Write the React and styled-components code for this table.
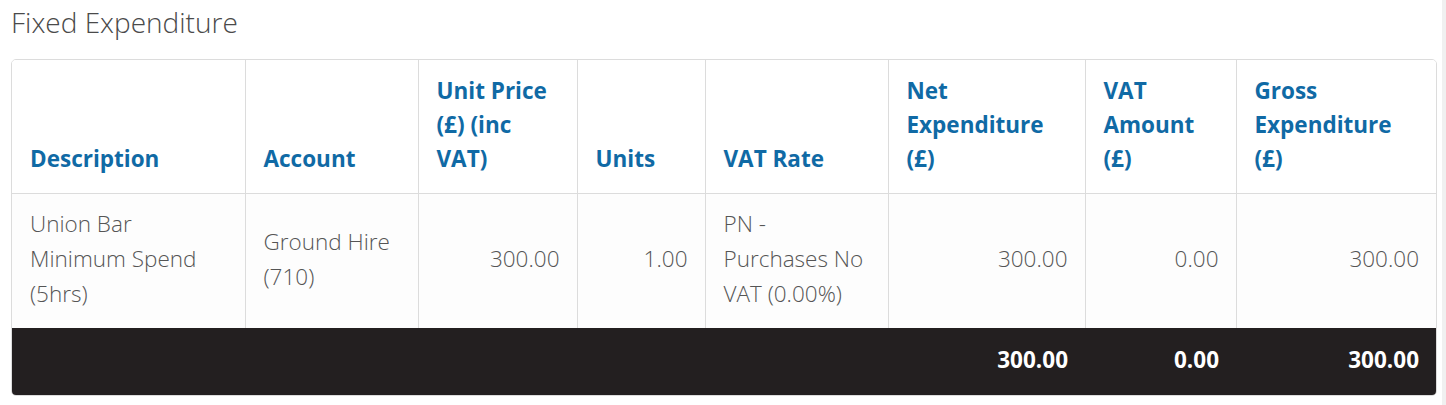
import React from 'react';
import styled, { createGlobalStyle } from 'styled-components';

const GlobalStyle = createGlobalStyle`
  body {
    margin: 0;
    background: #ffffff;
    font-family: "Open Sans", "Liberation Sans", sans-serif;
  }
`;

const Page = styled.div`
  display: flex;
  min-height: 405px;
`;

const Main = styled.div`
  flex: 1;
  padding: 0 5px 0 11px;
`;

const EdgeStrip = styled.div`
  width: 4px;
  background: #f0f0f0;
`;

const Title = styled.h2`
  margin: 0;
  padding: 4px 0 0 0;
  height: 59px;
  box-sizing: border-box;
  font-size: 28px;
  line-height: 36px;
  font-weight: 300;
  color: #4a4a4a;
`;

const TableFrame = styled.div`
  border: 1px solid #dcdcdc;
  border-radius: 5px;
  overflow: hidden;
`;

const Table = styled.table`
  width: 100%;
  border-collapse: collapse;
  table-layout: fixed;
`;

const HeadCell = styled.th`
  padding: 14px 18px 17px 18px;
  text-align: left;
  vertical-align: bottom;
  font-size: 22.5px;
  line-height: 34px;
  font-weight: 700;
  color: #106aa5;
  background: #ffffff;
  border-left: 1px solid #dcdcdc;
  border-bottom: 1px solid #dcdcdc;
  &:first-child {
    border-left: none;
  }
`;

const BodyCell = styled.td`
  padding: 12px 17px 17px 18px;
  text-align: ${(p) => (p.$num ? 'right' : 'left')};
  vertical-align: middle;
  font-size: 22.5px;
  line-height: 35px;
  font-weight: 300;
  color: #555555;
  background: #fdfdfd;
  border-left: 1px solid #dcdcdc;
  &:first-child {
    border-left: none;
  }
`;

const FootCell = styled.td`
  height: 67px;
  padding: 0 17px 4px 18px;
  box-sizing: border-box;
  text-align: right;
  vertical-align: middle;
  font-size: 22.5px;
  font-weight: 700;
  color: #ffffff;
  background: #231f20;
`;

const columns = [
  { label: 'Description', width: 233 },
  { label: 'Account', width: 173 },
  { label: 'Unit Price (£) (inc VAT)', width: 159 },
  { label: 'Units', width: 128 },
  { label: 'VAT Rate', width: 183 },
  { label: 'Net Expenditure (£)', width: 197 },
  { label: 'VAT Amount (£)', width: 151 },
  { label: 'Gross Expenditure (£)' },
];

const row = [
  { value: 'Union Bar Minimum Spend (5hrs)' },
  { value: 'Ground Hire (710)' },
  { value: '300.00', num: true },
  { value: '1.00', num: true },
  { value: 'PN - Purchases No VAT (0.00%)' },
  { value: '300.00', num: true },
  { value: '0.00', num: true },
  { value: '300.00', num: true },
];

const totals = ['300.00', '0.00', '300.00'];

export default function App() {
  return (
    <Page>
      <GlobalStyle />
      <Main>
        <Title>Fixed Expenditure</Title>
        <TableFrame>
          <Table>
            <colgroup>
              {columns.map((c) => (
                <col key={c.label} style={c.width ? { width: c.width } : undefined} />
              ))}
            </colgroup>
            <thead>
              <tr>
                {columns.map((c) => (
                  <HeadCell key={c.label}>{c.label}</HeadCell>
                ))}
              </tr>
            </thead>
            <tbody>
              <tr>
                {row.map((cell, i) => (
                  <BodyCell key={i} $num={cell.num}>{cell.value}</BodyCell>
                ))}
              </tr>
            </tbody>
            <tfoot>
              <tr>
                <FootCell colSpan={5} />
                {totals.map((t, i) => (
                  <FootCell key={i}>{t}</FootCell>
                ))}
              </tr>
            </tfoot>
          </Table>
        </TableFrame>
      </Main>
      <EdgeStrip />
    </Page>
  );
}
